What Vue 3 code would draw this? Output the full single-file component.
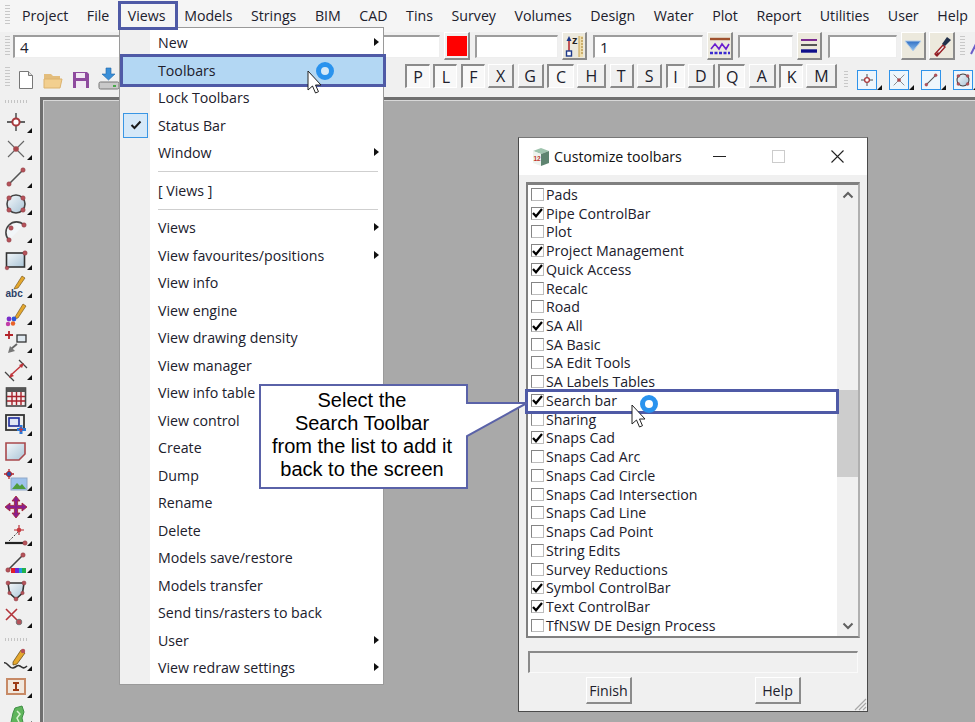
<script setup>
const menus = ['Project','File','Views','Models','Strings','BIM','CAD','Tins','Survey','Volumes','Design','Water','Plot','Report','Utilities','User','Help']

const letters = [
  { l:'P', w:25, p:true },{ l:'L', w:24, p:true },{ l:'F', w:24, p:true },{ l:'X', w:26 },{ l:'G', w:26 },
  { l:'C', w:27, p:true },{ l:'H', w:29 },{ l:'T', w:24 },{ l:'S', w:25 },{ l:'I', w:19, p:true },
  { l:'D', w:27 },{ l:'Q', w:27, p:true },{ l:'A', w:27 },{ l:'K', w:24, p:true },{ l:'M', w:31 }
]

const R = '#a8383c'
const dot = (x, y, r = 2) => `<circle cx="${x}" cy="${y}" r="${r}" fill="#b5525a" stroke="#8a3a40" stroke-width=".5"/>`

const snapPoint = `<path d="M12 3v18M3 12h18" stroke="#333" stroke-width="1.300"/><circle cx="12" cy="12" r="3.600" fill="#fff" stroke="${R}" stroke-width="2"/>`
const snapX = `<path d="M4 4l16 16M20 4L4 20" stroke="#666" stroke-width="1.100"/><circle cx="12" cy="12" r="2.800" fill="#a8484c"/>`
const snapLine = `<path d="M5 19L19 5" stroke="#555" stroke-width="1.600"/>${dot(5,19,2.200)}${dot(19,5,2.200)}`
const snapCircle = `<circle cx="12" cy="12" r="9" fill="url(#gl)" stroke="#444" stroke-width="1.600"/>${dot(5,6,2.200)}${dot(19,6,2.200)}${dot(5,18,2.200)}${dot(19,18,2.200)}`

const icons = [
  snapPoint, snapX, snapLine, snapCircle,
  `<path d="M5 20A10.500 10.500 0 0 1 20 5" fill="#f2f6f9" stroke="#444" stroke-width="1.600"/>${dot(5,20,2.200)}${dot(7,8,2.200)}${dot(20,5,2.200)}`,
  `<rect x="2.500" y="5" width="18" height="14" fill="url(#gl)" stroke="#333" stroke-width="1.600"/>${dot(21,5,2.200)}${dot(3,20,1.800)}`,
  `<path d="M11 12L18 1l3 2-7 10-4 1z" fill="#e5a82e" stroke="#6b4a10" stroke-width=".6"/><text x="1.500" y="21.500" font-size="10" font-weight="700" font-family="Liberation Sans, sans-serif" fill="#2b3f66">abc</text>`,
  `<path d="M11 14L19 1l3 2-8 12-4 1z" fill="#e5a82e" stroke="#6b4a10" stroke-width=".6"/><circle cx="5" cy="16" r="2.400" fill="#7a2fc9"/><circle cx="10" cy="16" r="2.400" fill="#2f56d8"/><circle cx="4" cy="21" r="2.200" fill="#c23ca8"/><circle cx="9" cy="20.500" r="2.200" fill="#e8622a"/>`,
  `<path d="M5 1v8M1 5h8" stroke="#b3242a" stroke-width="1.800"/><rect x="13" y="5" width="9" height="7" fill="#dfe9f0" stroke="#333" stroke-width="1.300"/><path d="M13 14L7 19" stroke="#666" stroke-width="1.800"/><path d="M4 23l2-7 5 5z" fill="#777"/>`,
  `<path d="M15 2l8 8M1 14l9 9" stroke="#444" stroke-width="1.300" fill="none"/><path d="M7 17L18 7" stroke="#c0343a" stroke-width="1.400"/><path d="M5 20l2-5 3 3zM20 5l-5 2 3 3z" fill="#c0343a"/>`,
  `<rect x="2.500" y="3" width="19" height="18" fill="#f7eeee" stroke="#444" stroke-width="1.600"/><rect x="2.500" y="3" width="19" height="4" fill="#555"/><path d="M3 11.500h18M3 16h18M8 7v13M12.500 7v13M17 7v13" stroke="#a8222c" stroke-width="1.400"/>`,
  `<rect x="2" y="2" width="18" height="15" fill="#eee" stroke="#333" stroke-width="1.800"/><rect x="5" y="5" width="10" height="8" fill="#dfe6f5" stroke="#1b2a9c" stroke-width="1.600"/><path d="M17 12v9M13 16.500h9" stroke="#2a78d8" stroke-width="3"/><path d="M17 14v5M15 16.500h4" stroke="#c8323a" stroke-width="1.100"/>`,
  `<path d="M2 3h19v11l-6 6H2z" fill="url(#gl)" stroke="#a8484c" stroke-width="1.600"/>`,
  `<path d="M5 1v10M0 6h10" stroke="#b3242a" stroke-width="1.300"/><circle cx="5" cy="6" r="2.600" fill="#2a4fa8" stroke="#b3242a"/><rect x="7" y="10" width="16" height="12" fill="#9fc3ec" stroke="#8fa8c8"/><path d="M8 21l5-6 3 3 2-2 4 5z" fill="#4f9d3c"/>`,
  `<path d="M12 1l4 5h-2.400v4.400H18V8l5 4-5 4v-2.400h-4.400V18H16l-4 5-4-5h2.400v-4.400H6V16l-5-4 5-4v2.400h4.400V6H8z" fill="#8b1f8e" stroke="#a1232a" stroke-width=".8"/>`,
  `<path d="M1 20h19" stroke="#222" stroke-width="2.200"/><path d="M5 18l9-9" stroke="#444" stroke-width="1" stroke-dasharray="2 1.500"/><path d="M15 2v10M10 7h10" stroke="#b3242a" stroke-width="1.100"/><circle cx="15" cy="7" r="2.300" fill="#c73a40"/>${dot(21,20,2.200)}`,
  `<path d="M4 19L18 5" stroke="#444" stroke-width="1.600"/>${dot(4,19,2.200)}${dot(19,4,2.200)}<rect x="7" y="17" width="4" height="5" fill="#e11d2a"/><rect x="11" y="17" width="4" height="5" fill="#6a2bd9"/><rect x="15" y="17" width="3" height="5" fill="#1e9be0"/><rect x="18" y="17" width="4" height="5" fill="#22b14c"/>`,
  `<path d="M4 5h16l-1.500 10L12 21l-6.500-6z" fill="url(#gl)" stroke="#333" stroke-width="1.600"/>${dot(4,5,2)}${dot(20,5,2)}${dot(12,21,2)}${dot(5.500,15,1.700)}${dot(18.500,15,1.700)}`,
  `<path d="M2 3l11 11M13 3L2 14" stroke="#b3343a" stroke-width="1.600"/><circle cx="15" cy="16" r="2.800" fill="#b5525a" stroke="#777"/>`,
  `<path d="M9 14L17 2l4 3-8 11-4 1z" fill="#e5a82e" stroke="#5b3f0c" stroke-width=".7"/><circle cx="19" cy="3" r="2.200" fill="#b5525a"/><path d="M0 15c3-2 5 6 9 5s4-4 7-2 4 3 7 0" fill="none" stroke="#333" stroke-width="1.600"/>`,
  `<rect x="3" y="3" width="18" height="15" fill="#f1e8de" stroke="#c78a66" stroke-width="2"/><path d="M9 6h6v2h-2v5h2v2H9v-2h2V8H9z" fill="#9c3b15"/>`,
  `<path d="M6 24L9 10l2-5 7-2 2 6-2 6 2 9z" fill="#5fb55b" stroke="#3f8f45"/><path d="M13 8l3 3-3 4 2 4" stroke="#d9f2d0" stroke-width="1.500" fill="none"/>`
]
const primary = icons.slice(0, 19)
const secondary = icons.slice(19)

const topSnaps = [snapPoint, snapX, snapLine, snapCircle]

const items = [
  ['Pads',0],['Pipe ControlBar',1],['Plot',0],['Project Management',1],['Quick Access',1],['Recalc',0],['Road',0],['SA All',1],
  ['SA Basic',0],['SA Edit Tools',0],['SA Labels Tables',0],['Search bar',1],['Sharing',0],['Snaps Cad',1],['Snaps Cad Arc',0],
  ['Snaps Cad Circle',0],['Snaps Cad Intersection',0],['Snaps Cad Line',0],['Snaps Cad Point',0],['String Edits',0],
  ['Survey Reductions',0],['Symbol ControlBar',1],['Text ControlBar',1],['TfNSW DE Design Process',0]
]

const menuRows = [
  { t:'New', sub:1 },{ t:'Toolbars', hot:1 },{ t:'Lock Toolbars' },{ t:'Status Bar', check:1 },{ t:'Window', sub:1 },{ sep:1 },
  { t:'[ Views ]' },{ sep:1 },{ t:'Views', sub:1 },{ t:'View favourites/positions', sub:1 },{ t:'View info' },{ t:'View engine' },
  { t:'View drawing density' },{ t:'View manager' },{ t:'View info table' },{ t:'View control' },{ t:'Create' },{ t:'Dump' },
  { t:'Rename' },{ t:'Delete' },{ t:'Models save/restore' },{ t:'Models transfer' },{ t:'Send tins/rasters to back' },
  { t:'User', sub:1 },{ t:'View redraw settings', sub:1 }
]
</script>

<template>
  <div class="app">
    <svg class="defs" width="0" height="0">
      <defs>
        <linearGradient id="gl" x1="0" y1="0" x2="1" y2="1">
          <stop offset="0" stop-color="#f4f8fb" />
          <stop offset="1" stop-color="#a9c4d6" />
        </linearGradient>
        <linearGradient id="tri" x1="0" y1="0" x2="0" y2="1">
          <stop offset="0" stop-color="#2f6fc4" />
          <stop offset="1" stop-color="#8fc0ee" />
        </linearGradient>
      </defs>
    </svg>

    <header class="menubar">
      <i class="grip-v"></i>
      <span v-for="m in menus" :key="m" class="menu-item">{{ m }}</span>
    </header>

    <div class="toolrow one">
      <i class="grip-v"></i>
      <div class="field f-a">4</div>
      <div class="field f-b">0</div>
      <button class="tbtn color"><span class="swatch"></span></button>
      <div class="field f-c"></div>
      <button class="tbtn">
        <svg width="22" height="24" viewBox="0 0 22 24">
          <path d="M6 5v14" stroke="#b3242a" stroke-width="1.500" />
          <path d="M6 2L3.500 7h5z" fill="#1e3a8a" />
          <rect x="3.500" y="17" width="5" height="5" fill="#fff" stroke="#1e3a8a" stroke-width="1.400" />
          <text x="9" y="10" class="z">z</text>
          <rect x="16" y="2" width="4" height="21" fill="#f0dfae" />
          <path d="M16 2v21" stroke="#c9a14a" stroke-width="1" />
          <path d="M18 4h2M18 7h2M18 10h2M18 13h2M18 16h2M18 19h2" stroke="#a67f2c" stroke-width="1" />
        </svg>
      </button>
      <div class="field f-d">1</div>
      <button class="tbtn w26">
        <svg width="22" height="20" viewBox="0 0 22 20">
          <path d="M1 3h20" stroke="#a0522d" stroke-width="2.400" />
          <path d="M2 13l4-5 4 5 3-5 4 5 3-5" fill="none" stroke="#6a1fd0" stroke-width="1.600" />
          <path d="M1 17h20" stroke="#3a2bd0" stroke-width="2.400" stroke-dasharray="3 1.500" />
        </svg>
      </button>
      <div class="field f-e"></div>
      <button class="tbtn">
        <svg width="18" height="16" viewBox="0 0 18 16">
          <path d="M1 2h16" stroke="#7b2a90" stroke-width="2" />
          <path d="M1 7h16" stroke="#444" stroke-width="1.800" />
          <path d="M1 13h16" stroke="#10108a" stroke-width="3.400" />
        </svg>
      </button>
      <div class="field f-f"></div>
      <button class="tbtn">
        <svg width="18" height="14" viewBox="0 0 18 14"><path d="M1 2h16L9 12z" fill="url(#tri)" stroke="#b6cfe8" /></svg>
      </button>
      <button class="tbtn w26 m3">
        <svg width="20" height="22" viewBox="0 0 20 22">
          <path d="M3 19L11 10l2 2-8 9z" fill="#eee" stroke="#9a1f25" stroke-width="1.400" />
          <path d="M3 20l3-3 1 1-2 3z" fill="#8a1a20" />
          <path d="M10 9l5-7 4 3-6 6z" fill="#22304a" />
        </svg>
      </button>
      <i class="grip-v tail"></i>
      <svg class="edge-icon" width="8" height="18" viewBox="0 0 8 18"><path d="M1 17L8 3" stroke="#6a5cc8" stroke-width="2" /></svg>
    </div>

    <div class="toolrow two">
      <i class="grip-v"></i>
      <svg class="ti t-new" width="18" height="20" viewBox="0 0 18 20"><path d="M2.500 1.500h9l4 4v13h-13z" fill="#fff" stroke="#777" /><path d="M11.500 1.500v4h4" fill="#ddd" stroke="#777" /></svg>
      <svg class="ti t-open" width="20" height="18" viewBox="0 0 20 18"><path d="M1 3h7l2 2h7v3H1z" fill="#e3bd7c" /><path d="M1 8h18l-2 9H1z" fill="#f2cf8f" stroke="#dcb36f" /></svg>
      <svg class="ti t-save" width="18" height="18" viewBox="0 0 18 18"><path d="M1 1h14l2 2v14H1z" fill="#8e4a9e" /><rect x="4" y="2" width="9" height="5" fill="#f1e8f3" /><rect x="4" y="10" width="10" height="7" fill="#f1e8f3" /></svg>
      <svg class="ti t-drive" width="22" height="24" viewBox="0 0 22 24"><path d="M8 1h5v6h4l-6.500 6L4 7h4z" fill="#3a8fd8" stroke="#1f66a8" stroke-width=".6" /><rect x="1" y="15" width="20" height="7" rx="1.500" fill="#c9c9c9" stroke="#777" /><rect x="15" y="18" width="3" height="2" fill="#49a84a" /></svg>
      <div class="letters">
        <button v-for="b in letters" :key="b.l" class="letter" :class="{ pressed: b.p }" :style="{ width: b.w + 'px' }">{{ b.l }}</button>
      </div>
      <i class="grip-v tail2"></i>
      <div class="snaps">
        <div v-for="(s, i) in topSnaps" :key="i" class="snap-btn">
          <svg width="16" height="16" viewBox="0 0 24 24" v-html="s"></svg>
        </div>
      </div>
    </div>

    <div class="workspace">
      <aside class="lefttools">
        <i class="grip-h"></i>
        <div v-for="(ic, i) in primary" :key="i" class="lt-btn">
          <svg width="24" height="24" viewBox="0 0 24 24" v-html="ic"></svg>
        </div>
        <i class="grip-h second"></i>
        <div v-for="(ic, i) in secondary" :key="'s' + i" class="lt-btn">
          <svg width="24" height="24" viewBox="0 0 24 24" v-html="ic"></svg>
        </div>
      </aside>
      <main class="canvas"></main>
    </div>

    <!-- dropdown menu -->
    <nav class="dropdown">
      <template v-for="(r, i) in menuRows" :key="i">
        <div v-if="r.sep" class="dd-sep"></div>
        <div v-else class="dd-row" :class="{ hot: r.hot }">
          <span v-if="r.check" class="dd-check">
            <svg width="12" height="10" viewBox="0 0 12 10"><path d="M1.500 5l3 3 6-6.500" fill="none" stroke="#1a1a1a" stroke-width="2" /></svg>
          </span>
          <span class="dd-text">{{ r.t }}</span>
          <span v-if="r.sub" class="dd-arrow"></span>
        </div>
      </template>
    </nav>
    <div class="views-box"></div>

    <!-- dialog -->
    <section class="dialog">
      <div class="titlebar">
        <svg class="app-icon" width="18" height="20" viewBox="0 0 18 20">
          <path d="M1 4l8-3 8 3-8 3z" fill="#9fc4ae" />
          <path d="M1 4l8 3v12l-8-3z" fill="#eef3ef" />
          <path d="M9 7l8-3v12l-8 3z" fill="#5e8470" />
          <text x="1.500" y="14" class="twelve">12</text>
        </svg>
        <span class="dlg-title">Customize toolbars</span>
        <span class="win-btn min"><i></i></span>
        <span class="win-btn max"><i></i></span>
        <span class="win-btn close">
          <svg width="13" height="13" viewBox="0 0 13 13"><path d="M.5.500l12 12M12.500.500l-12 12" stroke="#222" stroke-width="1.100" /></svg>
        </span>
      </div>
      <div class="dlg-body">
        <div class="listbox">
          <ul class="list">
            <li v-for="it in items" :key="it[0]" class="list-row">
              <span class="cb">
                <svg v-if="it[1]" width="11" height="10" viewBox="0 0 11 10"><path d="M1 5l3 3.300L10 1" fill="none" stroke="#000" stroke-width="2.200" /></svg>
              </span>
              <span>{{ it[0] }}</span>
            </li>
          </ul>
          <div class="scrollbar">
            <svg width="12" height="8" viewBox="0 0 12 8"><path d="M1.500 6.500L6 2l4.500 4.500" fill="none" stroke="#606060" stroke-width="2" /></svg>
            <div class="track"><div class="thumb"></div></div>
            <svg width="12" height="8" viewBox="0 0 12 8"><path d="M1.500 1.500L6 6l4.500-4.500" fill="none" stroke="#606060" stroke-width="2" /></svg>
          </div>
        </div>
        <div class="statusfield"></div>
        <div class="dlg-actions">
          <button class="dlg-btn">Finish</button>
          <button class="dlg-btn">Help</button>
        </div>
        <svg class="resize" width="14" height="14" viewBox="0 0 14 14"><path d="M13 2L2 13M13 6l-7 7M13 10l-3 3" stroke="#a8a8a8" stroke-width="1.200" /></svg>
      </div>
    </section>

    <div class="search-box"></div>

    <!-- callout -->
    <svg class="callout-svg" width="272" height="108" viewBox="0 0 272 108">
      <path d="M1 1H208V19L268 19L208 52V104H1Z" fill="#fff" stroke="#5a62a8" stroke-width="2" />
    </svg>
    <div class="callout-text">Select the<br />Search Toolbar<br />from the list to add it<br />back to the screen</div>

    <!-- pointers -->
    <div class="ring r1"></div>
    <svg class="cursor c1" width="15" height="25" viewBox="0 0 15 25"><path d="M1 1v19l4.500-4 3 7 3-1.300-3-6.700H14z" fill="#fff" stroke="#222" stroke-width="1" /></svg>
    <div class="ring r2"></div>
    <svg class="cursor c2" width="15" height="25" viewBox="0 0 15 25"><path d="M1 1v19l4.500-4 3 7 3-1.300-3-6.700H14z" fill="#fff" stroke="#222" stroke-width="1" /></svg>
  </div>
</template>

<style>
html, body { margin: 0; padding: 0; background: #a9a9a9; }
</style>

<style scoped>
.app {
  position: relative;
  width: 975px;
  height: 722px;
  overflow: hidden;
  display: flex;
  flex-direction: column;
  background: #f0f0f0;
  font-family: "Open Sans", "Noto Sans", sans-serif;
  font-size: 14.200px;
  color: #20202c;
}
.defs { position: absolute; }
button { font-family: inherit; color: inherit; padding: 0; margin: 0; }

.menubar {
  height: 32px;
  flex: none;
  display: flex;
  align-items: center;
  padding: 0 0 2px 5px;
  background: #f5f5f5;
  box-sizing: border-box;
}
.menu-item { margin-right: 18.550px; white-space: nowrap; }
.grip-v {
  display: block;
  flex: none;
  width: 5px;
  height: 20px;
  background: repeating-linear-gradient(#c8c8c8 0 1px, transparent 1px 3px);
}
.menubar .grip-v { margin-right: 12px; }

.toolrow { display: flex; align-items: center; flex: none; background: #f0f0f0; box-sizing: border-box; padding-left: 5px; }
.toolrow.one { height: 28px; }
.toolrow.two { height: 37px; padding-bottom: 3px; }

.field {
  flex: none;
  height: 23px;
  line-height: 20px;
  box-sizing: border-box;
  padding-left: 5px;
  background: #fff;
  border-top: 2px solid #9d9d9d;
  border-left: 2px solid #9d9d9d;
  border-right: 1px solid #eee;
  border-bottom: 1px solid #eee;
  font-size: 15px;
}
.f-a { width: 200px; margin-left: 3px; }
.f-b { width: 73px; margin-left: 154px; padding-left: 6px; }
.f-c { width: 83px; margin-left: 5px; }
.f-d { width: 110px; margin-left: 6px; }
.f-e { width: 55px; margin-left: 5px; }
.f-f { width: 69px; margin-left: 6px; }

.tbtn {
  flex: none;
  width: 25px;
  height: 28px;
  margin-left: 4px;
  box-sizing: border-box;
  display: flex;
  align-items: center;
  justify-content: center;
  background: #ece9dd;
  border: 0;
  border-right: 2px solid #8b8b8b;
  border-bottom: 2px solid #8b8b8b;
  border-top: 1px solid #fff;
  border-left: 1px solid #fff;
}
.w26 { width: 26px; }
.m3 { margin-left: 3px; }
.color { width: 26px; background: #f0f0f0; }
.swatch { width: 20px; height: 20px; background: #ff0000; }
.z { font: bold 11px "Liberation Sans", sans-serif; fill: #222; }
.grip-v.tail { margin-left: 5px; }
.edge-icon { margin-left: 5px; flex: none; }

.ti { flex: none; margin-top: 6px; }
.t-new { margin-left: 7px; }
.t-open { margin-left: 8px; }
.t-save { margin-left: 9px; }
.t-drive { margin-left: 8px; margin-top: 4px; }

.letters { display: flex; gap: 3.400px; margin-left: 285px; margin-bottom: 2px; }
.letter {
  flex: none;
  height: 24px;
  box-sizing: border-box;
  background: #f0f0f0;
  border: 0;
  border-top: 1px solid #fff;
  border-left: 1px solid #fff;
  border-right: 2px solid #8b8b8b;
  border-bottom: 2px solid #8b8b8b;
  font-size: 16px;
  line-height: 20px;
  text-align: center;
}
.letter.pressed {
  background: #f8f8f8;
  border: 0;
  border-top: 2px solid #8b8b8b;
  border-left: 2px solid #8b8b8b;
  border-right: 1px solid #fff;
  border-bottom: 1px solid #fff;
}
.grip-v.tail2 { margin: 6px 0 0 7px; height: 18px; width: 4px; }
.snaps { display: flex; gap: 12px; margin: 6px 0 0 9px; }
.snap-btn {
  position: relative;
  flex: none;
  width: 20px;
  height: 20px;
  box-sizing: border-box;
  display: flex;
  align-items: center;
  justify-content: center;
  background: #eef6fc;
  border: 1px solid #2f93ea;
}
.snap-btn::after {
  content: "";
  position: absolute;
  right: -6px;
  bottom: -1px;
  border-left: 5px solid transparent;
  border-bottom: 5px solid #111;
}

.workspace { flex: 1; display: flex; min-height: 0; }
.lefttools { width: 40px; flex: none; background: #f0f0f0; display: flex; flex-direction: column; }
.grip-h {
  display: block;
  flex: none;
  width: 24px;
  height: 3px;
  margin: 3px 0 5px 5px;
  background: repeating-linear-gradient(90deg, #c4c4c4 0 1px, transparent 1px 3px);
}
.grip-h.second { margin: 7px 0 5px 5px; }
.lt-btn {
  position: relative;
  flex: none;
  height: 27.550px;
  display: flex;
  align-items: center;
  padding-left: 4px;
}
.lt-btn svg { flex: none; }
.lt-btn::after {
  content: "";
  position: absolute;
  left: 27px;
  bottom: 3px;
  border-left: 5px solid transparent;
  border-bottom: 5px solid #111;
}
.canvas {
  flex: 1;
  background: #a9a9a9;
  border-top: 3px solid #6f6f6f;
  border-left: 3px solid #6f6f6f;
  box-shadow: inset 1px 1px 0 #d8d8d8;
}

.dropdown {
  position: absolute;
  left: 119px;
  top: 27px;
  width: 265px;
  height: 658px;
  box-sizing: border-box;
  padding-top: 1px;
  background: linear-gradient(90deg, #f0f0f0 0 30px, #fff 30px);
  border: 1px solid #9a9a9a;
}
.dd-row {
  position: relative;
  height: 27.500px;
  display: flex;
  align-items: center;
  padding-left: 38px;
  white-space: nowrap;
}
.dd-row.hot { background: #b3d7f3; }
.dd-row.hot::after {
  content: "";
  position: absolute;
  left: 0;
  right: -3px;
  top: -3px;
  bottom: -3px;
  border: 3px solid #4f5aa6;
}
.dd-arrow {
  position: absolute;
  right: 4px;
  top: 9px;
  border-left: 5px solid #111;
  border-top: 4.500px solid transparent;
  border-bottom: 4.500px solid transparent;
}
.dd-check {
  position: absolute;
  left: 3px;
  top: 1px;
  width: 25px;
  height: 25px;
  box-sizing: border-box;
  display: flex;
  align-items: center;
  justify-content: center;
  background: #d5e8f8;
  border: 1px solid #3a96e4;
}
.dd-sep { height: 1px; margin: 4.500px 5px 4.500px 38px; background: #cfcfcf; }
.views-box {
  position: absolute;
  left: 118px;
  top: 1px;
  width: 60px;
  height: 29px;
  box-sizing: border-box;
  border: 3px solid #4f5aa6;
}

.dialog {
  position: absolute;
  left: 518px;
  top: 137px;
  width: 350px;
  height: 575px;
  box-sizing: border-box;
  display: flex;
  flex-direction: column;
  background: #f0f0f0;
  border: 1px solid #4a4a4a;
  border-top-color: #777;
}
.titlebar {
  position: relative;
  flex: none;
  height: 37px;
  background: #fff;
  display: flex;
  align-items: center;
  padding: 0 23px 0 13px;
}
.app-icon { flex: none; }
.twelve { font: bold 6.500px "Liberation Sans", sans-serif; fill: #c0392b; }
.dlg-title { margin-left: 4px; color: #111; white-space: nowrap; }
.win-btn { flex: none; display: flex; align-items: center; justify-content: center; width: 13px; height: 13px; }
.win-btn.min { margin-left: auto; }
.win-btn.min i { display: block; width: 13px; height: 1px; background: #222; }
.win-btn.max { margin-left: 46px; }
.win-btn.max i { display: block; width: 11px; height: 11px; border: 1px solid #ccc; }
.win-btn.close { margin-left: 46px; }

.dlg-body { position: relative; flex: 1; display: flex; flex-direction: column; padding: 7px 7px 0 7px; min-height: 0; }
.listbox {
  flex: none;
  height: 456px;
  box-sizing: border-box;
  display: flex;
  background: #fff;
  border-top: 3px solid #808080;
  border-left: 2px solid #808080;
  border-right: 2px solid #b0b0b0;
  border-bottom: 2px solid #808080;
  overflow: hidden;
}
.list { flex: 1; margin: 0; padding: 0 0 0 3px; list-style: none; overflow: hidden; }
.list-row { height: 18.740px; display: flex; align-items: center; gap: 2px; white-space: nowrap; }
.cb {
  flex: none;
  width: 13px;
  height: 13px;
  box-sizing: border-box;
  background: #fff;
  border: 1px solid #858585;
  border-bottom-color: #bcbcbc;
  border-right-color: #bcbcbc;
  display: flex;
  align-items: center;
  justify-content: center;
}
.scrollbar {
  flex: none;
  width: 21px;
  background: #f0f0f0;
  display: flex;
  flex-direction: column;
  align-items: center;
  padding: 6px 0;
  box-sizing: border-box;
}
.track { flex: 1; width: 100%; position: relative; }
.thumb { position: absolute; left: 0; right: 0; top: 191px; height: 87px; background: #cdcdcd; }
.statusfield {
  flex: none;
  height: 22px;
  margin: 13px 2px 0 2px;
  box-sizing: border-box;
  border-top: 2px solid #8a8a8a;
  border-left: 2px solid #8a8a8a;
  background: #f0f0f0;
  border-right: 1px solid #fafafa;
  border-bottom: 1px solid #fafafa;
}
.dlg-actions { display: flex; justify-content: space-between; padding: 4px 59px 0 60px; }
.dlg-btn {
  width: 46px;
  height: 27px;
  box-sizing: border-box;
  font-size: 14.200px;
  background: #f0f0f0;
  border: 0;
  border-top: 1px solid #fff;
  border-left: 1px solid #fff;
  border-right: 2px solid #8b8b8b;
  border-bottom: 2px solid #8b8b8b;
}
.resize { position: absolute; right: 0; bottom: 0; }

.search-box {
  position: absolute;
  left: 525px;
  top: 389px;
  width: 314px;
  height: 25px;
  box-sizing: border-box;
  border: 3px solid #4f5aa6;
}
.callout-svg { position: absolute; left: 259px; top: 384px; }
.callout-text {
  position: absolute;
  left: 259px;
  top: 389px;
  width: 206px;
  text-align: center;
  font-family: "Liberation Sans", sans-serif;
  font-size: 20px;
  line-height: 23px;
  color: #000;
}
.ring {
  position: absolute;
  width: 18px;
  height: 18px;
  box-sizing: border-box;
  border-radius: 50%;
  border: 5px solid #2a93ee;
  background: rgba(255, 255, 255, 0.45);
}
.r1 { left: 316px; top: 62px; }
.r2 { left: 640px; top: 395px; }
.cursor { position: absolute; }
.c1 { left: 307px; top: 70px; }
.c2 { left: 631px; top: 404px; }
</style>
